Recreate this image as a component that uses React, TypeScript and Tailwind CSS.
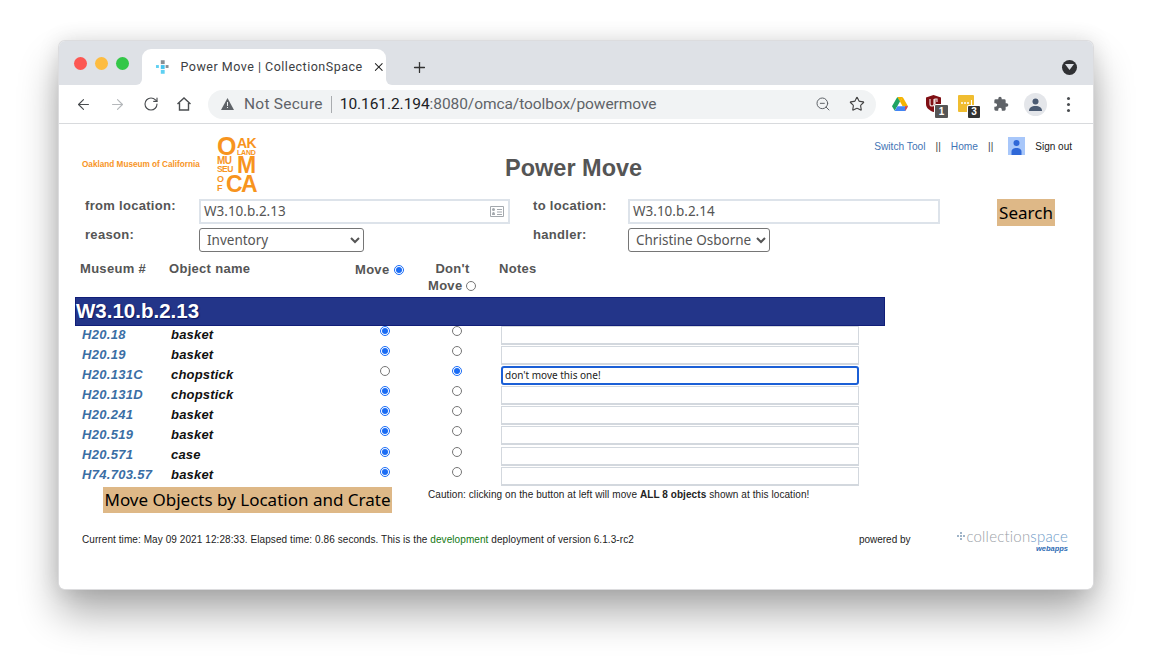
import React from 'react';
import { ArrowLeft, ArrowRight, RotateCw, X, Plus, ZoomOut, Star } from 'lucide-react';

const SANS = 'font-["Liberation_Sans",Arial,sans-serif]';
const NOTO = 'font-["Noto_Sans","Open_Sans",sans-serif]';
const CHROME = 'font-["Roboto","Noto_Sans",sans-serif]';

const ROWS = [
  { id: 'H20.18', name: 'basket' },
  { id: 'H20.19', name: 'basket' },
  { id: 'H20.131C', name: 'chopstick', stay: true, note: "don't move this one!" },
  { id: 'H20.131D', name: 'chopstick' },
  { id: 'H20.241', name: 'basket' },
  { id: 'H20.519', name: 'basket' },
  { id: 'H20.571', name: 'case' },
  { id: 'H74.703.57', name: 'basket' },
];

const Radio: React.FC<{ checked?: boolean }> = ({ checked }) => (
  <input type="radio" checked={!!checked} readOnly className="w-[10px] h-[10px] m-0 accent-[#1a6cf5] block" />
);

const Toolbar: React.FC = () => (
  <div className="h-[39px] bg-white border-b border-[#d8dadd] flex items-center text-[#4a4d50]">
    <ArrowLeft size={17} strokeWidth={1.6} className="ml-[16px]" />
    <ArrowRight size={17} strokeWidth={1.6} className="ml-[17px] text-[#b5b8bb]" />
    <RotateCw size={16} strokeWidth={1.7} className="ml-[17px]" />
    <svg width="16" height="16" viewBox="0 0 16 16" className="ml-[17px]" fill="none" stroke="currentColor" strokeWidth="1.4">
      <path d="M1.5 8 8 2l6.5 6M3.5 7v7h9V7" />
    </svg>
    <div className="ml-[16px] w-[668px] h-[29px] rounded-full bg-[#f1f3f4] flex items-center pl-[13px]">
      <svg width="13" height="12" viewBox="0 0 13 12"><path d="M6.5 0 13 12H0z" fill="#5f6368" /><path d="M6 4h1v4H6zM6 9h1v1H6z" fill="#f1f3f4" /></svg>
      <span className={`${CHROME} ml-[10px] pt-[1px] text-[15.500px] text-[#5f6368] tracking-[0.25px]`}>Not Secure</span>
      <span className="ml-[8px] w-px h-[17px] bg-[#a9acaf]" />
      <span className={`${CHROME} ml-[8px] pt-[1px] text-[15.500px] tracking-[-0.07px] text-[#202124]`}>10.161.2.194<span className="text-[#5f6368]">:8080/omca/toolbox/powermove</span></span>
      <ZoomOut size={16} strokeWidth={1.5} className="ml-auto text-[#5f6368]" />
      <Star size={16} strokeWidth={1.7} className="ml-[18px] mr-[11px] text-[#444]" />
    </div>
    <svg width="16" height="14" viewBox="0 0 16 14" className="ml-[16px]">
      <path d="M5.3 0h5.4L8 5z" fill="#f5b400" /><path d="M5.3 0 0 9.2l2.7 4.6L8 4.6z" fill="#1ea362" />
      <path d="M10.7 0 16 9.2h-5.4L8 4.6z" fill="#f5b400" /><path d="M2.7 14h10.6L16 9.2H5.4z" fill="#4285f4" />
      <path d="M13.3 14 16 9.2h-3z" fill="#ea4335" />
    </svg>
    <div className="relative ml-[18px] w-[16px] h-[18px]">
      <svg width="15" height="17" viewBox="0 0 15 17"><path d="M7.5 0 15 2.5V9c0 4-3.5 6.5-7.5 8C3.500 15.500 0 13 0 9V2.500z" fill="#800f14" /><path d="M4 4v5a2 2 0 0 0 4 0V4M9 9V4h2v3" stroke="#e9d9d9" strokeWidth="1.2" fill="none" /></svg>
      <span className={`${SANS} absolute left-[9px] top-[10px] w-[13px] h-[13px] bg-[#555] text-white text-[10px] font-bold leading-[13px] text-center rounded-[1px] ring-1 ring-white`}>1</span>
    </div>
    <div className="relative ml-[16px] w-[16px] h-[18px]">
      <div className="w-[16px] h-[17px] bg-[#f0bd30] rounded-[1px] flex items-center justify-center gap-[1px] pb-[1px]">
        <span className="w-[2px] h-[2px] bg-white rounded-full" /><span className="w-[2px] h-[2px] bg-white rounded-full" /><span className="w-[2px] h-[2px] bg-white rounded-full" />
        <span className="w-px h-[6px] bg-white ml-[1px]" />
      </div>
      <span className={`${SANS} absolute left-[10px] top-[11px] w-[12px] h-[12px] bg-[#333] text-white text-[10px] font-bold leading-[12px] text-center rounded-[1px] ring-1 ring-white`}>3</span>
    </div>
    <svg width="16" height="16" viewBox="0 0 24 24" className="ml-[19px]" fill="#5f6368">
      <path d="M20.500 11H19V7a2 2 0 0 0-2-2h-4V3.500a2.500 2.500 0 0 0-5 0V5H4a2 2 0 0 0-2 2v3.800h1.500a2.700 2.700 0 0 1 0 5.400H2V20a2 2 0 0 0 2 2h3.800v-1.500a2.700 2.700 0 0 1 5.400 0V22H17a2 2 0 0 0 2-2v-4h1.500a2.500 2.500 0 0 0 0-5z" />
    </svg>
    <div className="ml-[15px] w-[23px] h-[23px] rounded-full bg-[#e4e6ea] flex items-center justify-center">
      <svg width="13" height="13" viewBox="0 0 13 13" fill="#4a5a72"><circle cx="6.500" cy="3.500" r="3" /><path d="M0 13c0-3.500 2.500-5 6.500-5s6.500 1.500 6.500 5z" /></svg>
    </div>
    <div className="ml-[20px] flex flex-col gap-[3px]">
      <span className="w-[3px] h-[3px] rounded-full bg-[#4a4d50]" /><span className="w-[3px] h-[3px] rounded-full bg-[#4a4d50]" /><span className="w-[3px] h-[3px] rounded-full bg-[#4a4d50]" />
    </div>
  </div>
);

const TabStrip: React.FC = () => (
  <div className="h-[44px] bg-[#dee1e6] flex items-end relative">
    <div className="absolute left-[15px] top-[16px] flex gap-[8px]">
      <span className="w-[13px] h-[13px] rounded-full bg-[#fc5753]" />
      <span className="w-[13px] h-[13px] rounded-full bg-[#fdbc40]" />
      <span className="w-[13px] h-[13px] rounded-full bg-[#33c748]" />
    </div>
    <div className="ml-[83px] w-[244px] h-[36px] bg-white rounded-t-[9px] flex items-center pl-[13px] relative">
      {/* flared tab corners */}
      <span className="absolute left-[-6px] bottom-0 w-[6px] h-[6px] bg-white" />
      <span className="absolute left-[-6px] bottom-0 w-[6px] h-[6px] bg-[#dee1e6] rounded-br-[6px]" />
      <span className="absolute right-[-6px] bottom-0 w-[6px] h-[6px] bg-white" />
      <span className="absolute right-[-6px] bottom-0 w-[6px] h-[6px] bg-[#dee1e6] rounded-bl-[6px]" />
      <svg width="16" height="16" viewBox="0 0 16 16">
        <rect x="6" y="1" width="4" height="4" fill="#8a8f94" /><rect x="1" y="6" width="3" height="3" fill="#5fd0f2" /><rect x="6" y="6" width="4" height="4" fill="#43c3ee" />
        <rect x="11" y="6" width="3" height="3" fill="#8a8f94" /><rect x="6" y="11" width="4" height="4" fill="#5fd0f2" />
      </svg>
      <span className={`${CHROME} ml-[10px] w-[181px] text-[12.500px] text-[#3c4043] tracking-[0.5px] whitespace-nowrap`}>Power Move | CollectionSpace</span>
      <X size={14} strokeWidth={1.8} className="ml-[11px] text-[#222]" />
    </div>
    <Plus size={17} strokeWidth={1.8} className="ml-[25px] mb-[9px] text-[#333]" />
    <div className="ml-auto mr-[16px] mb-[10px] w-[15px] h-[15px] rounded-full bg-[#303134] flex items-center justify-center">
      <svg width="9" height="7" viewBox="0 0 9 7"><path d="M0 0h9L4.500 6z" fill="#dee1e6" /></svg>
    </div>
  </div>
);

const Logo: React.FC = () => (
  <div className={`${SANS} w-[40px] text-[#f7941e] font-bold flex flex-col leading-none`}>
    <div className="flex items-start h-[19px]">
      <span className="text-[25px] leading-[19px] w-[20px]">O</span>
      <div className="flex flex-col">
        <span className="text-[14px] leading-[12px] tracking-[-0.5px]">AK</span>
        <span className="text-[7px] leading-[7px] tracking-[-0.2px]">LAND</span>
      </div>
    </div>
    <div className="flex items-start h-[19px]">
      <div className="flex flex-col w-[20px]">
        <span className="text-[10px] leading-[9px] tracking-[-0.6px]">MU</span>
        <span className="text-[8.500px] leading-[9px] tracking-[-0.6px]">SEU</span>
      </div>
      <span className="text-[23px] leading-[19px]">M</span>
    </div>
    <div className="flex items-start h-[18px]">
      <div className="flex flex-col w-[9px]">
        <span className="text-[9px] leading-[9px]">O</span>
        <span className="text-[9px] leading-[9px]">F</span>
      </div>
      <span className="text-[23px] leading-[19px] tracking-[-1.5px]">CA</span>
    </div>
  </div>
);

const TextBox: React.FC<{ value: string; width: string; icon?: boolean }> = ({ value, width, icon }) => (
  <div className={`${width} ${NOTO} h-[25px] border-2 border-[#dde3ea] flex items-center pl-[3px] pr-[4px] text-[13.500px] text-[#555]`}>
    {value}
    {icon && (
      <svg width="14" height="11" viewBox="0 0 14 11" className="ml-auto" fill="#a3a8ad">
        <path d="M1 0h12a1 1 0 0 1 1 1v9a1 1 0 0 1-1 1H1a1 1 0 0 1-1-1V1a1 1 0 0 1 1-1zm0 1v9h12V1zM2 3.500a1.500 1.500 0 0 1 3 0 1.500 1.500 0 0 1-3 0zM2 9c0-2 .5-3 1.500-3S5 7 5 9zM7 3h5v1H7zM7 5.500h5v1H7zM7 8h5v1H7z" />
      </svg>
    )}
  </div>
);

const Field: React.FC<{ value: string; width: string }> = ({ value, width }) => (
  <select
    value={value}
    onChange={() => undefined}
    className={`${width} ${NOTO} h-[24px] border border-[#767676] rounded-[3px] pl-[3px] text-[13.500px] text-[#555] bg-white`}
  >
    <option>{value}</option>
  </select>
);

const Label: React.FC<{ children: React.ReactNode; className?: string }> = ({ children, className }) => (
  <span className={`${SANS} text-[13px] font-bold text-[#555] tracking-[0.3px] ${className ?? ''}`}>{children}</span>
);

const Page: React.FC = () => (
  <div className={`${SANS} relative flex-1 bg-white`}>
    {/* top */}
    <div className="h-[75px] flex pl-[23px] pt-[13px]">
      <span className="mt-[22px] w-[135px] text-[8.200px] font-bold text-[#f7941e] whitespace-nowrap">Oakland Museum of California</span>
      <Logo />
      <h1 className="ml-[248px] mt-[17px] text-[23.500px] leading-[28px] font-bold text-[#555] whitespace-nowrap">Power Move</h1>
      <div className="ml-auto mr-[21px] flex items-start text-[10.200px] h-[20px] leading-[18px] mt-[1px]">
        <a className="text-[#3f74b5]">Switch Tool</a>
        <span className="ml-[10px] text-[#444]">||</span>
        <a className="ml-[10px] text-[#3f74b5]">Home</a>
        <span className="ml-[10px] text-[#444]">||</span>
        <svg width="17" height="18" viewBox="0 0 17 18" className="ml-[15px] -mt-[1px]">
          <rect width="17" height="18" fill="#a8c7fa" />
          <circle cx="8.500" cy="6" r="3" fill="#2f68d8" /><path d="M3.500 18v-3c0-3 2-4 5-4s5 1 5 4v3z" fill="#2f68d8" />
        </svg>
        <span className="ml-[10px] text-[#222] text-[10px]">Sign out</span>
      </div>
    </div>
    {/* search form */}
    <div className="grid grid-cols-[26px_114px_334px_95px_369px_58px] grid-rows-[29px_24px] items-start">
      <span />
      <Label className="leading-[14px]">from location:</Label>
      <TextBox value="W3.10.b.2.13" width="w-[311px]" icon />
      <Label className="leading-[14px]">to location:</Label>
      <TextBox value="W3.10.b.2.14" width="w-[312px]" />
      <button className={`${NOTO} h-[27px] bg-[#deb887] text-[17px] leading-[25px] text-black text-center`}>Search</button>
      <span />
      <Label className="leading-[14px]">reason:</Label>
      <Field value="Inventory" width="w-[165px]" />
      <Label className="leading-[14px]">handler:</Label>
      <Field value="Christine Osborne" width="w-[142px]" />
    </div>
    {/* column heads */}
    <div className="grid grid-cols-[21px_89px_186px_73px_71px_auto] mt-[9px] h-[36px] leading-[16px] items-start">
      <span />
      <Label>Museum #</Label>
      <Label>Object name</Label>
      <Label className="flex items-center gap-[5px] h-[16px] pt-[1px]">Move <Radio checked /></Label>
      <div className="w-[49px] text-center">
        <Label className="block">Don't</Label>
        <Label className="flex items-center gap-[4px] pt-[1px]">Move <Radio /></Label>
      </div>
      <Label>Notes</Label>
    </div>
    {/* location band */}
    <div className="ml-[16px] w-[810px] h-[29px] bg-[#233589] border border-[#111e78] flex items-center text-white text-[20.500px] font-bold leading-none [text-shadow:1px_1px_1px_#0a1560]">
      W3.10.b.2.13
    </div>
    {/* rows */}
    <div>
      {ROWS.map(row => (
        <div key={row.id} className="grid grid-cols-[23px_89px_209px_72px_49px_auto] h-[20.100px] items-start">
          <span />
          <span className="text-[13px] font-bold italic text-[#3a6ea5] leading-[16px] pt-[0.5px] tracking-[0.3px]">{row.id}</span>
          <span className="text-[13px] font-bold italic text-[#111] leading-[16px] pt-[0.5px] tracking-[0.2px]">{row.name}</span>
          <span><Radio checked={!row.stay} /></span>
          <span><Radio checked={row.stay} /></span>
          {row.note ? (
            <div className={`${NOTO} w-[358px] h-[19px] border-2 border-[#1b5fd6] rounded-[3px] text-[10px] leading-[15px] pl-[2px] text-[#222]`}>
              {row.note}
            </div>
          ) : (
            <div className="w-[358px] h-[19px] border-x border-b-2 border-t border-[#d3d8de] bg-white" />
          )}
        </div>
      ))}
    </div>
    {/* action row */}
    <div className="flex items-start pl-[44px]">
      <button className={`${NOTO} w-[289px] h-[26px] bg-[#deb887] text-[17px] leading-[26px] text-black whitespace-nowrap text-center`}>Move Objects by Location and Crate</button>
      <span className="ml-[36px] mt-[2px] text-[10px] leading-[12px] text-[#222] tracking-[0.08px] whitespace-nowrap">
        Caution: clicking on the button at left will move <b>ALL 8 objects</b> shown at this location!
      </span>
    </div>
    {/* footer */}
    <div className="flex items-start pl-[23px] mt-[15px]">
      <span className="text-[10px] leading-[16px] text-[#222] tracking-[0.08px] whitespace-nowrap pt-[4px]">
        Current time: May 09 2021 12:28:33. Elapsed time: 0.86 seconds. This is the <span className="text-[#11780f]">development</span> deployment of version 6.1.3-rc2
      </span>
      <span className="ml-[225px] text-[10px] leading-[16px] text-[#222] pt-[4px] whitespace-nowrap">powered by</span>
      <div className="ml-auto mr-[25px] -mt-[1px] flex flex-col items-end">
        <div className={`flex items-center font-["Lato","Open_Sans",sans-serif] font-light text-[15px] leading-[18px] tracking-[0.2px] text-[#9aa0a6]`}>
          <svg width="8" height="8" viewBox="0 0 8 8" className="mr-px" fill="#9fb4c8">
            <rect x="3" y="0" width="2" height="2" /><rect x="0" y="3" width="2" height="2" /><rect x="3" y="3" width="2" height="2" /><rect x="6" y="3" width="2" height="2" /><rect x="3" y="6" width="2" height="2" />
          </svg>
          collection<span className="text-[#6d9ac8]">space</span>
        </div>
        <span className="text-[7.500px] leading-[8px] font-bold italic text-[#2f6db5]">webapps</span>
      </div>
    </div>
  </div>
);

const App: React.FC = () => (
  <div className="w-[1152px] h-[668px] bg-white pl-[59px] pt-[41px] overflow-hidden">
    <div className="w-[1034px] h-[548px] flex flex-col rounded-[6px] overflow-hidden ring-1 ring-[#dcdcde] shadow-[0_24px_40px_rgba(0,0,0,0.33),0_0_22px_rgba(0,0,0,0.12)]">
      <TabStrip />
      <Toolbar />
      <Page />
    </div>
  </div>
);

export default App;
